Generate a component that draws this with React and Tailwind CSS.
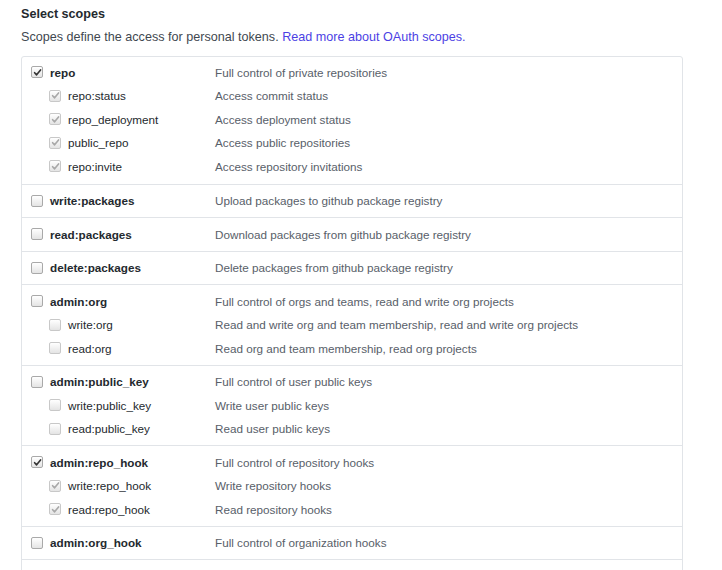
import React from "react";

const scopes = [
    {
        name: "repo",
        description: "Full control of private repositories",
        checked: true,
        children: [
            { name: "repo:status", description: "Access commit status" },
            { name: "repo_deployment", description: "Access deployment status" },
            { name: "public_repo", description: "Access public repositories" },
            { name: "repo:invite", description: "Access repository invitations" },
        ],
    },
    { name: "write:packages", description: "Upload packages to github package registry" },
    { name: "read:packages", description: "Download packages from github package registry" },
    { name: "delete:packages", description: "Delete packages from github package registry" },
    {
        name: "admin:org",
        description: "Full control of orgs and teams, read and write org projects",
        children: [
            { name: "write:org", description: "Read and write org and team membership, read and write org projects" },
            { name: "read:org", description: "Read org and team membership, read org projects" },
        ],
    },
    {
        name: "admin:public_key",
        description: "Full control of user public keys",
        children: [
            { name: "write:public_key", description: "Write user public keys" },
            { name: "read:public_key", description: "Read user public keys" },
        ],
    },
    {
        name: "admin:repo_hook",
        description: "Full control of repository hooks",
        checked: true,
        children: [
            { name: "write:repo_hook", description: "Write repository hooks" },
            { name: "read:repo_hook", description: "Read repository hooks" },
        ],
    },
    { name: "admin:org_hook", description: "Full control of organization hooks" },
    {
        name: "admin:gpg_key",
        description: "Full control of user gpg keys (Developer Preview)",
        children: [
            { name: "write:gpg_key", description: "Write user gpg keys" },
            { name: "read:gpg_key", description: "Read user gpg keys" },
        ],
    },
];

function Checkbox({ checked, disabled }) {
    return (
        <span
            className={`flex items-center justify-center w-[12px] h-[12px] shrink-0 rounded-[2px] border bg-gradient-to-b from-white to-[#e4e4e4] ${disabled ? "border-[#c8c8c8]" : "border-[#a9a9a9]"}`}
        >
            {checked && (
                <svg width="9" height="9" viewBox="0 0 10 10">
                    <path
                        d="M1.8 5.2 L4 7.6 L8.4 2.2"
                        fill="none"
                        stroke={disabled ? "#a8a8a8" : "#333333"}
                        strokeWidth="1.8"
                        strokeLinecap="round"
                        strokeLinejoin="round"
                    />
                </svg>
            )}
        </span>
    );
}

function ScopeLine({ scope, child, checked, className = "" }) {
    return (
        <div className={`flex items-center h-[19px] ${className}`}>
            <div className={`flex items-center w-[193px] ${child ? "pl-[27px]" : "pl-[9px]"}`}>
                <Checkbox checked={checked} disabled={child} />
                <span className={`ml-[7px] text-[#24292e] ${child ? "" : "font-bold"}`}>
                    {scope.name}
                </span>
            </div>
            <span className="text-[#586069]">{scope.description}</span>
        </div>
    );
}

export default function App() {
    return (
        <div className="bg-white min-h-screen px-[21px] pt-[5px] font-['Liberation_Sans',Arial,sans-serif]">
            <h2 className="text-[12.6px] leading-[19px] font-bold text-[#24292e]">Select scopes</h2>
            <p className="mt-[4px] text-[12.6px] leading-[19px] text-[#3f4850]">
                Scopes define the access for personal tokens.{" "}
                <a href="#" className="text-[#4c3fe4]">Read more about OAuth scopes.</a>
            </p>

            <div className="mt-[9px] w-[662px] border border-[#e1e4e8] rounded-[3px] text-[11.7px]">
                {scopes.map((scope, index) => (
                    <div
                        key={scope.name}
                        className={index === 0 ? "pt-[6px] pb-[7.5px]" : "pt-[7px] pb-[6.5px] border-t border-[#e1e4e8]"}
                    >
                        <ScopeLine scope={scope} checked={scope.checked} />
                        {scope.children && scope.children.map((sub) => (
                            <ScopeLine
                                key={sub.name}
                                scope={sub}
                                child
                                checked={scope.checked}
                                className="mt-[4.5px]"
                            />
                        ))}
                    </div>
                ))}
            </div>
        </div>
    );
}
